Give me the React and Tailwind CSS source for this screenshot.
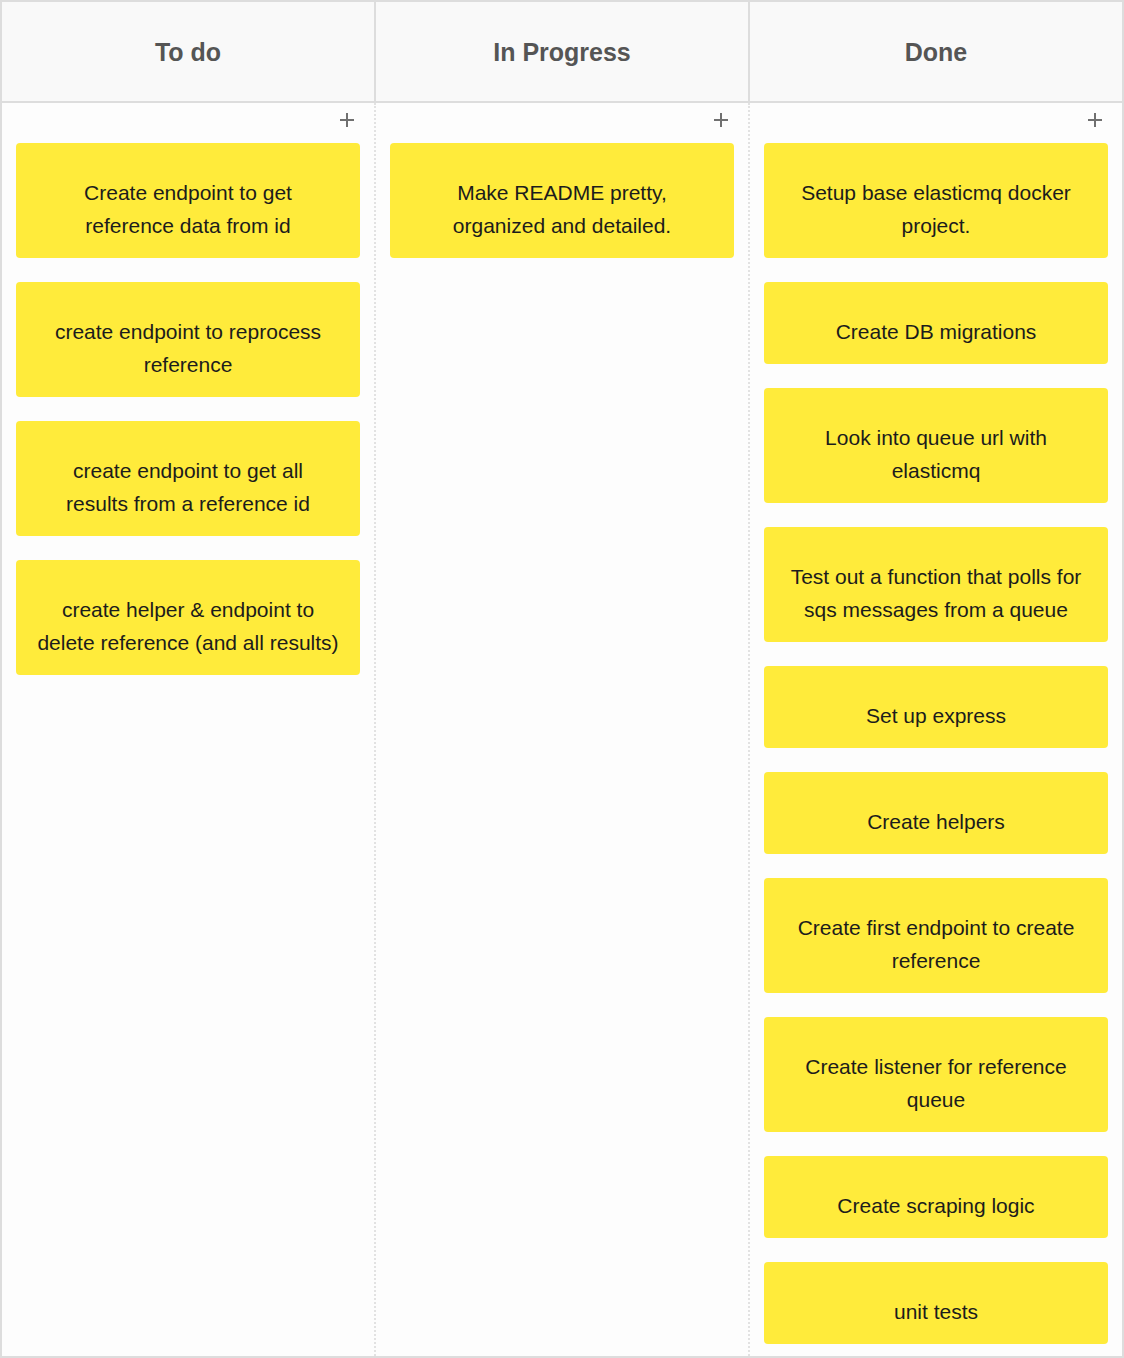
import React from 'react';

// card text is kept in its displayed lines so wrapping matches the board
const columns = [
  {
    title: 'To do',
    cards: [
      ['Create endpoint to get', 'reference data from id'],
      ['create endpoint to reprocess', 'reference'],
      ['create endpoint to get all', 'results from a reference id'],
      ['create helper & endpoint to', 'delete reference (and all results)'],
    ],
  },
  {
    title: 'In Progress',
    cards: [['Make README pretty,', 'organized and detailed.']],
  },
  {
    title: 'Done',
    cards: [
      ['Setup base elasticmq docker', 'project.'],
      ['Create DB migrations'],
      ['Look into queue url with', 'elasticmq'],
      ['Test out a function that polls for', 'sqs messages from a queue'],
      ['Set up express'],
      ['Create helpers'],
      ['Create first endpoint to create', 'reference'],
      ['Create listener for reference', 'queue'],
      ['Create scraping logic'],
      ['unit tests'],
    ],
  },
];

const PlusIcon = () => (
  <svg width="14" height="14" viewBox="0 0 14 14">
    <path d="M7 0v14M0 7h14" stroke="#707070" strokeWidth="2" />
  </svg>
);

const Card = ({ lines }) => (
  <div className="rounded-[4px] bg-[#ffeb3b] px-[10px] pt-[33px] pb-[16px] text-center text-[21px] leading-[33px] text-[#1c1c1c]">
    {lines.map((l) => (
      <div key={l} className="whitespace-nowrap">
        {l}
      </div>
    ))}
  </div>
);

const App = () => {
  return (
    <div
      className="w-[1124px] border-2 border-[#dddddd] bg-[#fdfdfd]"
      style={{ fontFamily: '"Liberation Sans", Arial, sans-serif' }}
    >
      <div className="flex border-b-2 border-[#dddddd] bg-[#f9f9f9]">
        {columns.map((col, i) => (
          <div
            key={col.title}
            className={`flex h-[99px] items-center justify-center pt-[2px] text-[25px] font-bold text-[#555] ${
              i < 2 ? 'w-[374px] border-r-2 border-[#dddddd]' : 'w-[372px]'
            }`}
          >
            {col.title}
          </div>
        ))}
      </div>
      <div className="flex">
        {columns.map((col, i) => (
          <div
            key={col.title}
            className={`px-[14px] pb-[12px] ${
              i < 2 ? 'w-[374px] border-r-2 border-dotted border-[#e2e2e2]' : 'w-[372px]'
            }`}
          >
            <div className="flex h-[40px] items-start justify-end pt-[10px] pr-[6px]">
              <PlusIcon />
            </div>
            <div className="flex flex-col gap-[24px]">
              {col.cards.map((c) => (
                <Card key={c.join(' ')} lines={c} />
              ))}
            </div>
          </div>
        ))}
      </div>
    </div>
  );
};

export default App;
